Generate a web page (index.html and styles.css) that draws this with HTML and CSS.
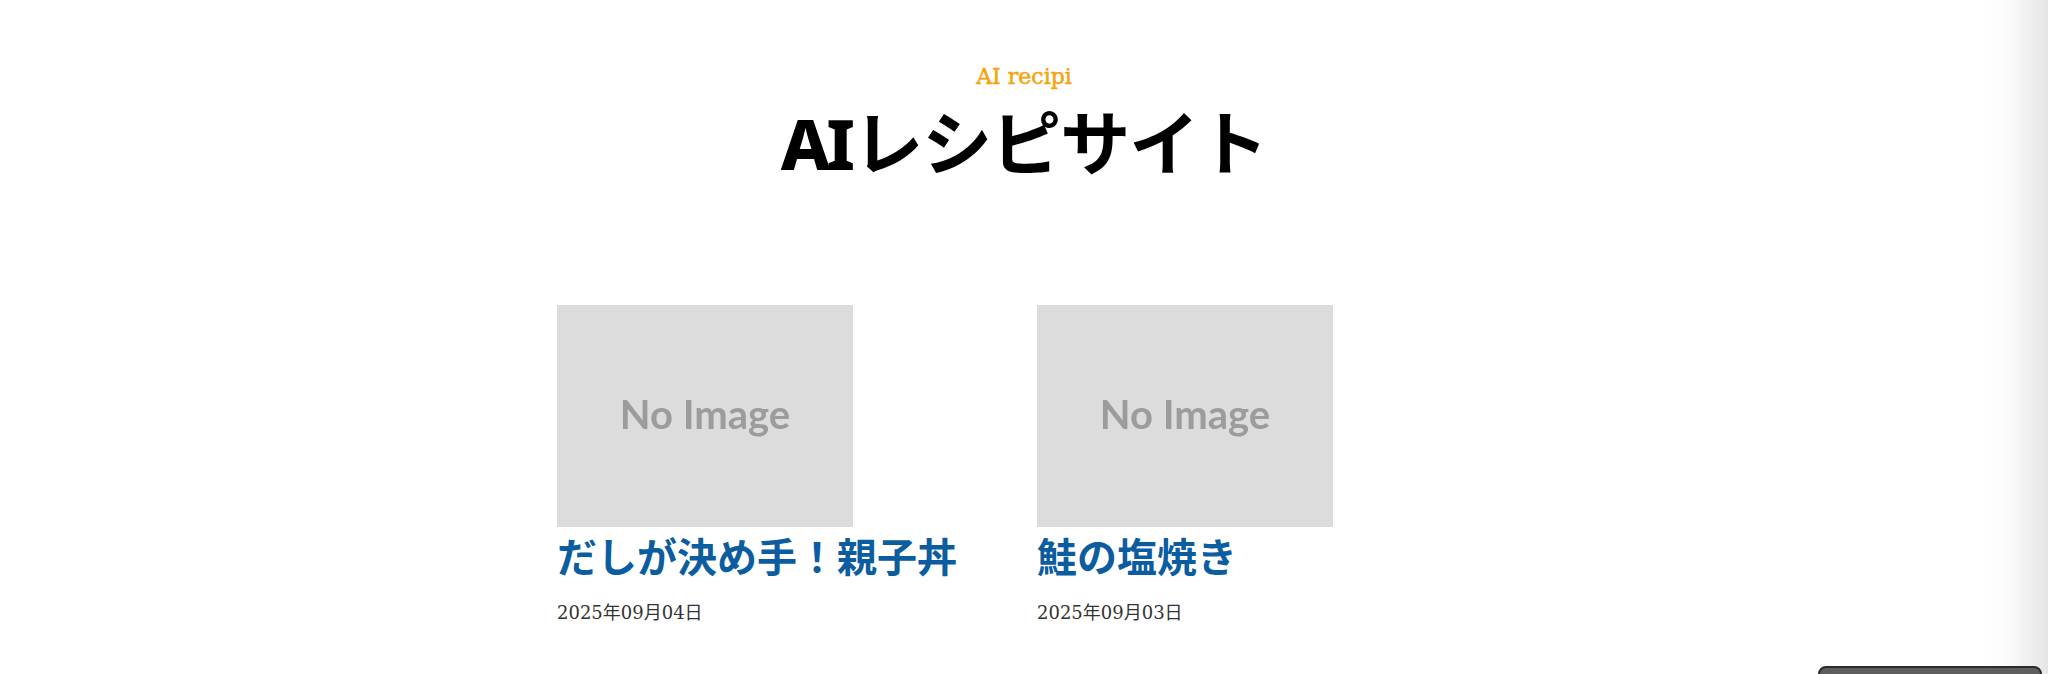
FILE: index.html
```html
<!DOCTYPE html>
<html lang="ja">
<head>
<meta charset="utf-8">
<title>AIレシピサイト</title>
<link rel="stylesheet" href="styles.css">
</head>
<body>
<header class="site-header">
  <p class="tagline">AI recipi</p>
  <h1 class="site-title"><span class="site-title-latin">AI</span>レシピサイト</h1>
</header>
<main class="container">
  <div class="post-grid">
    <article class="post-card">
      <div class="thumb"><span class="thumb-text">No Image</span></div>
      <h2 class="post-title">だしが決め手！親子丼</h2>
      <p class="post-date">2025年09月04日</p>
    </article>
    <article class="post-card">
      <div class="thumb"><span class="thumb-text">No Image</span></div>
      <h2 class="post-title">鮭の塩焼き</h2>
      <p class="post-date">2025年09月03日</p>
    </article>
  </div>
</main>
<div class="edge-shadow"></div>
<div class="floating-bar"></div>
</body>
</html>
```
FILE: styles.css
```css
html, body {
  margin: 0;
  padding: 0;
  background: #ffffff;
}
body {
  font-family: "Noto Sans CJK JP", "Noto Sans", sans-serif;
  color: #222;
  overflow: hidden;
}
.site-header {
  text-align: center;
  padding-top: 66px;
}
.tagline {
  margin: 0;
  font-family: "DejaVu Serif", "Noto Sans CJK JP", serif;
  font-size: 22px;
  line-height: 22px;
  color: #f5a30c;
  -webkit-text-stroke: 0.5px #f5a30c;
}
.site-title {
  margin: 17px 0 0;
  font-family: "Noto Sans CJK JP", sans-serif;
  font-weight: 700;
  font-size: 70px;
  line-height: 1;
  letter-spacing: -1px;
  color: #000;
}
.site-title-latin {
  font-family: "Noto Sans", "Noto Sans CJK JP", sans-serif;
  font-weight: 800;
  letter-spacing: -4px;
  margin-right: 2px;
}
.container {
  width: 934px;
  margin: 127px auto 0;
}
.post-grid {
  display: grid;
  grid-template-columns: repeat(2, 440px);
  column-gap: 40px;
}
.thumb {
  width: 296px;
  height: 222px;
  background: #dcdcdc;
  display: flex;
  align-items: center;
  justify-content: center;
}
.thumb-text {
  font-family: "Lato", "Noto Sans", sans-serif;
  font-weight: 700;
  font-size: 40px;
  color: #9c9c9c;
  filter: blur(0.6px);
  margin-top: -4px;
}
.post-title {
  margin: 0;
  font-family: "Noto Sans CJK JP", sans-serif;
  font-weight: 700;
  font-size: 40px;
  line-height: 56px;
  color: #0b5d9f;
}
.post-date {
  margin: 16px 0 0;
  font-family: "DejaVu Serif", "Noto Sans CJK JP", serif;
  font-size: 18px;
  line-height: 27px;
  color: #333;
}
.edge-shadow {
  position: fixed;
  top: 0;
  right: 0;
  width: 64px;
  height: 100%;
  background: linear-gradient(to right, rgba(0,0,0,0), rgba(0,0,0,0.02) 40%, rgba(0,0,0,0.1));
  pointer-events: none;
}
.floating-bar {
  position: fixed;
  left: 1818px;
  top: 666px;
  width: 220px;
  height: 40px;
  background: #5e5e5e;
  border: 2px solid #2b2b2b;
  border-radius: 8px;
}
```
